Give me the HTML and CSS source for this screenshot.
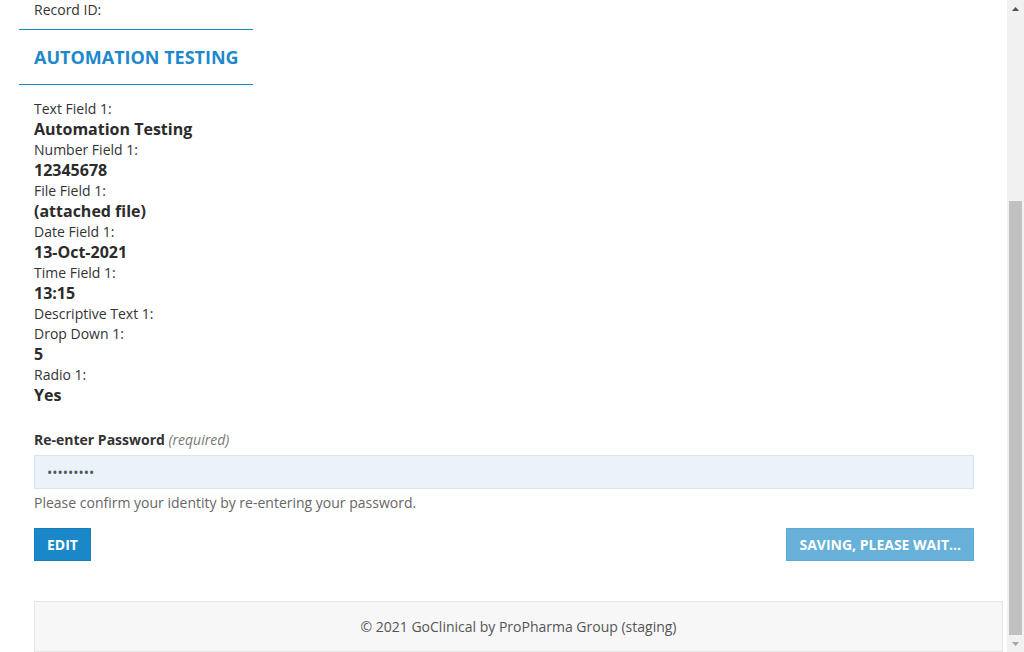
FILE: index.html
```html
<!DOCTYPE html>
<html lang="en">
<head>
<meta charset="utf-8">
<title>GoClinical - Sign Record</title>
<link rel="stylesheet" href="styles.css">
</head>
<body class="app">
<div class="viewport">
  <main class="container">
    <section class="details">
      <div class="field record-id"><div class="field-label">Record ID:</div></div>
    </section>
    <h2 class="form-heading">AUTOMATION TESTING</h2>
    <section class="details">
      <div class="field"><div class="field-label">Text Field 1:</div><div class="field-value">Automation Testing</div></div>
      <div class="field"><div class="field-label">Number Field 1:</div><div class="field-value">12345678</div></div>
      <div class="field"><div class="field-label">File Field 1:</div><div class="field-value">(attached file)</div></div>
      <div class="field"><div class="field-label">Date Field 1:</div><div class="field-value">13-Oct-2021</div></div>
      <div class="field"><div class="field-label">Time Field 1:</div><div class="field-value">13:15</div></div>
      <div class="field"><div class="field-label">Descriptive Text 1:</div></div>
      <div class="field"><div class="field-label">Drop Down 1:</div><div class="field-value">5</div></div>
      <div class="field"><div class="field-label">Radio 1:</div><div class="field-value">Yes</div></div>
    </section>
    <form class="sign-form" onsubmit="return false;">
      <label class="pw-label" for="pw">Re-enter Password <em>(required)</em></label>
      <input class="pw-input" id="pw" type="password" value="123456789">
      <p class="help">Please confirm your identity by re-entering your password.</p>
      <div class="actions">
        <button type="button" class="btn btn-edit">Edit</button>
        <button type="button" class="btn btn-save">Saving, please wait...</button>
      </div>
    </form>
    <footer class="footer">© 2021 GoClinical by ProPharma Group (staging)</footer>
  </main>
</div>
<div class="scrollbar" aria-hidden="true">
  <div class="sb-btn"><svg width="7" height="4" viewBox="0 0 7 4"><path d="M0 4 L3.5 0 L7 4 Z" fill="#505050"/></svg></div>
  <div class="sb-track"><div class="sb-thumb"></div></div>
  <div class="sb-btn"><svg width="7" height="4" viewBox="0 0 7 4"><path d="M0 0 L7 0 L3.5 4 Z" fill="#a3a3a3"/></svg></div>
</div>
</body>
</html>
```

FILE: styles.css
```css
* { box-sizing: border-box; }
html, body { margin: 0; padding: 0; }
body {
  font-family: "Open Sans", "Liberation Sans", sans-serif;
  font-size: 14px;
  line-height: 20px;
  color: #333;
  background: #fff;
}
.app {
  display: flex;
  height: 100vh;
  overflow: hidden;
}
.viewport {
  flex: 1;
  min-width: 0;
}
.container { padding: 0 4px 0 19px; }
.details { padding-left: 15px; }
.field-label { line-height: 20px; }
.field-value {
  font-size: 16px;
  line-height: 21px;
  font-weight: 700;
  color: #2b2b2b;
}
.record-id { margin-bottom: 9px; }
.form-heading {
  width: 234px;
  margin: 0 0 14px;
  padding: 15px;
  border-top: 1px solid #1a87c8;
  border-bottom: 1px solid #1a87c8;
  color: #1e88cb;
  font-size: 18px;
  line-height: 24px;
  font-weight: 700;
  white-space: nowrap;
}
.sign-form { margin: 24px 29px 0 15px; }
.pw-label {
  display: block;
  margin-bottom: 5px;
  font-size: 14px;
  line-height: 20px;
  font-weight: 700;
}
.pw-label em { font-weight: 400; color: #777; }
.pw-input {
  display: block;
  width: 100%;
  height: 34px;
  margin: 0;
  padding: 0 12px;
  border: 1px solid #d9e6f2;
  background: #ebf3fa;
  font-family: "Open Sans", "Liberation Sans", sans-serif;
  font-size: 14px;
  color: #555;
  outline: none;
}
.help { margin: 4px 0 0; color: #666; line-height: 20px; }
.actions {
  display: flex;
  justify-content: space-between;
  margin-top: 15px;
}
.btn {
  margin: 0;
  padding: 6px 12px;
  border: 1px solid;
  font-family: "Open Sans", "Liberation Sans", sans-serif;
  font-size: 14px;
  line-height: 19px;
  font-weight: 700;
  color: #fff;
  text-transform: uppercase;
  cursor: pointer;
}
.btn-edit { background: #1a87c8; border-color: #1a7dba; }
.btn-save { background: #66b0d9; border-color: #5fa9d4; cursor: default; }
.footer {
  margin: 40px 0 0 15px;
  padding: 15px 0 14px;
  background: #f7f7f7;
  border: 1px solid #e6e6e6;
  text-align: center;
  color: #555;
}
.scrollbar {
  width: 17px;
  flex: none;
  display: flex;
  flex-direction: column;
  background: #f1f1f1;
}
.sb-btn {
  height: 17px;
  flex: none;
  display: flex;
  align-items: center;
  justify-content: center;
}
.sb-track {
  flex: 1;
  display: flex;
  flex-direction: column;
  justify-content: flex-end;
  padding: 0 2px;
}
.sb-thumb {
  height: 434px;
  background: #c1c1c1;
}
```
